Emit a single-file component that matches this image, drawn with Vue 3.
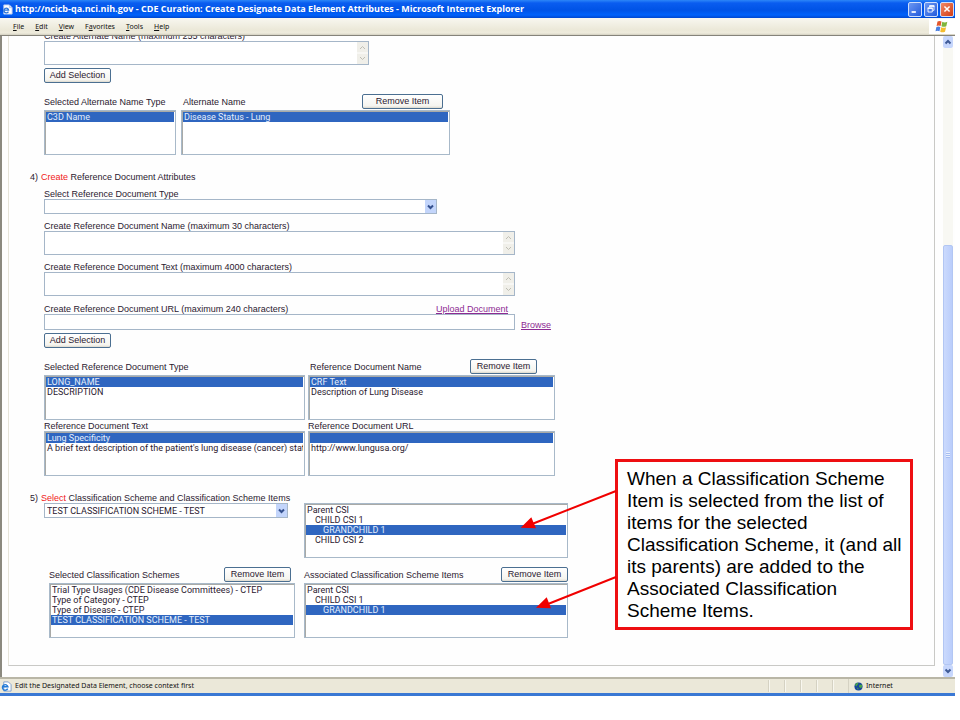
<script setup>
import { ref } from 'vue'

const title = 'http://ncicb-qa.nci.nih.gov - CDE Curation: Create Designate Data Element Attributes - Microsoft Internet Explorer'

const menus = [
  ['', 'F', 'ile'],
  ['', 'E', 'dit'],
  ['', 'V', 'iew'],
  ['F', 'a', 'vorites'],
  ['', 'T', 'ools'],
  ['', 'H', 'elp'],
]

const schemes = [
  'Trial Type Usages (CDE Disease Committees) - CTEP',
  'Type of Category - CTEP',
  'Type of Disease - CTEP',
  'TEST CLASSIFICATION SCHEME - TEST',
]

const schemeItems = [
  { text: 'Parent CSI', level: 0 },
  { text: 'CHILD CSI 1', level: 1 },
  { text: 'GRANDCHILD 1', level: 2 },
  { text: 'CHILD CSI 2', level: 1 },
]

const chosenNameType = ref(['C3D Name'])
const chosenName = ref(['Disease Status - Lung'])
const chosenDocType = ref(['LONG_NAME'])
const chosenDocName = ref(['CRF Text'])
const chosenDocText = ref(['Lung Specificity'])
const chosenDocUrl = ref([''])
const chosenScheme = ref(['TEST CLASSIFICATION SCHEME - TEST'])
const chosenItem = ref(['GRANDCHILD 1'])
const chosenAssociated = ref(['GRANDCHILD 1'])
const docType = ref('')
const scheme = ref('TEST CLASSIFICATION SCHEME - TEST')
</script>

<template>
  <div class="window">
    <header class="titlebar">
      <svg class="page-icon" viewBox="0 0 12 12" aria-hidden="true">
        <path d="M2 1h6l3 3v7H2z" fill="#fff" stroke="#b9cdf0" />
        <path d="M8 1v3h3" fill="#d8e5fb" stroke="#8faee0" stroke-width=".6" />
        <path d="M7 8.3A2.6 2.6 0 1 1 7.2 6.6H2.4" fill="none" stroke="#2a74d8" stroke-width="1.4" />
      </svg>
      <h1 class="title">{{ title }}</h1>
      <div class="window-buttons">
        <button class="win" type="button" aria-label="Minimize">
          <svg viewBox="0 0 14 14"><path d="M3 10.5h5" stroke="#fff" stroke-width="2" /></svg>
        </button>
        <button class="win" type="button" aria-label="Restore">
          <svg viewBox="0 0 14 14" fill="none" stroke="#fff"><path d="M5.5 5V3.5h5v5H9" /><path d="M3.5 6h5v4.5h-5z" /><path d="M3 6h6M5 3.5h6" stroke-width="1.5" /></svg>
        </button>
        <button class="win close" type="button" aria-label="Close">
          <svg viewBox="0 0 14 14"><path d="M4 4l6 6M10 4l-6 6" stroke="#fff" stroke-width="1.8" /></svg>
        </button>
      </div>
    </header>

    <nav class="menubar">
      <button v-for="m in menus" :key="m[2]" class="menu" type="button">{{ m[0] }}<u>{{ m[1] }}</u>{{ m[2] }}</button>
      <div class="flag">
        <svg viewBox="0 0 14 13" aria-hidden="true">
          <path d="M2.5 1.5q2-1.2 4 0L5.6 6q-2-1-4 0z" fill="#e4572b" />
          <path d="M7.3 1.8q2.500 1.200 5 0L11.300 6.300q-2.500 1-4.900 0z" fill="#7fb53c" />
          <path d="M1.400 6.900q2-1 4 0L4.500 11.300q-2-1.200-4 0z" fill="#4a7fe0" />
          <path d="M6.200 7.200q2.500 1 4.900 0L10 11.700q-2.500 1.100-4.800 0z" fill="#f4bd2f" />
        </svg>
      </div>
    </nav>

    <div class="viewport">
      <main class="frame">
        <section class="block names">
          <label class="label" for="alt-name">Create Alternate Name (maximum 255 characters)</label>
          <div class="area short">
            <textarea id="alt-name"></textarea>
            <svg class="spin" viewBox="0 0 11 22" aria-hidden="true"><path d="M0 11h11" stroke="#fff" /><path d="M3 7l2.500-2.500L8 7M3 15l2.500 2.500L8 15" /></svg>
          </div>
          <button class="btn add" type="button">Add Selection</button>

          <div class="pair alternate">
            <div class="col">
              <div class="head"><label class="label" for="alt-types">Selected Alternate Name Type</label></div>
              <select id="alt-types" v-model="chosenNameType" class="list" multiple>
                <option>C3D Name</option>
              </select>
            </div>
            <div class="col">
              <div class="head">
                <label class="label inset" for="alt-names">Alternate Name</label>
                <button class="btn wide" type="button">Remove Item</button>
              </div>
              <select id="alt-names" v-model="chosenName" class="list" multiple>
                <option>Disease Status - Lung</option>
              </select>
            </div>
          </div>
        </section>

        <section class="block documents">
          <h2 class="step"><span>4)</span><span><em>Create</em> Reference Document Attributes</span></h2>
          <label class="label" for="doc-type">Select Reference Document Type</label>
          <div class="combo doc-combo">
            <select id="doc-type" v-model="docType"><option value=""></option></select>
            <svg viewBox="0 0 11 13" aria-hidden="true"><path d="M3 5.500l2.500 2.500L8 5.500" /></svg>
          </div>
          <label class="label spaced" for="doc-name">Create Reference Document Name (maximum 30 characters)</label>
          <div class="area">
            <textarea id="doc-name"></textarea>
            <svg class="spin" viewBox="0 0 11 22" aria-hidden="true"><path d="M0 11h11" stroke="#fff" /><path d="M3 7l2.500-2.500L8 7M3 15l2.500 2.500L8 15" /></svg>
          </div>
          <label class="label spaced" for="doc-text">Create Reference Document Text (maximum 4000 characters)</label>
          <div class="area">
            <textarea id="doc-text"></textarea>
            <svg class="spin" viewBox="0 0 11 22" aria-hidden="true"><path d="M0 11h11" stroke="#fff" /><path d="M3 7l2.500-2.500L8 7M3 15l2.500 2.500L8 15" /></svg>
          </div>
          <div class="url-head">
            <label class="label" for="doc-url">Create Reference Document URL (maximum 240 characters)</label>
            <a class="link" href="#upload">Upload Document</a>
          </div>
          <div class="url-row">
            <input id="doc-url" class="text" type="text" />
            <a class="link" href="#browse">Browse</a>
          </div>
          <button class="btn add" type="button">Add Selection</button>

          <div class="pair reference">
            <div class="col">
              <div class="head"><label class="label" for="doc-types">Selected Reference Document Type</label></div>
              <select id="doc-types" v-model="chosenDocType" class="list" multiple>
                <option>LONG_NAME</option>
                <option>DESCRIPTION</option>
              </select>
            </div>
            <div class="col">
              <div class="head">
                <label class="label inset" for="doc-names">Reference Document Name</label>
                <button class="btn drawn-in" type="button">Remove Item</button>
              </div>
              <select id="doc-names" v-model="chosenDocName" class="list" multiple>
                <option>CRF Text</option>
                <option>Description of Lung Disease</option>
              </select>
            </div>
            <div class="col">
              <label class="label" for="doc-texts">Reference Document Text</label>
              <select id="doc-texts" v-model="chosenDocText" class="list" multiple>
                <option>Lung Specificity</option>
                <option>A brief text description of the patient's lung disease (cancer) status and</option>
              </select>
            </div>
            <div class="col">
              <label class="label" for="doc-urls">Reference Document URL</label>
              <select id="doc-urls" v-model="chosenDocUrl" class="list" multiple>
                <option value=""></option>
                <option>http://www.lungusa.org/</option>
              </select>
            </div>
          </div>
        </section>

        <section class="block schemes">
          <h2 class="step"><span>5)</span><label for="scheme"><em>Select</em> Classification Scheme and Classification Scheme Items</label></h2>
          <div class="pair pick">
            <div class="combo">
              <select id="scheme" v-model="scheme"><option>TEST CLASSIFICATION SCHEME - TEST</option></select>
              <svg viewBox="0 0 11 13" aria-hidden="true"><path d="M3 5.500l2.500 2.500L8 5.500" /></svg>
            </div>
            <select v-model="chosenItem" class="list tall" multiple aria-label="Classification Scheme Items">
              <option v-for="i in schemeItems" :key="i.text" :class="'level-' + i.level">{{ i.text }}</option>
            </select>
          </div>
          <div class="pair associated">
            <div class="col">
              <div class="head">
                <label class="label" for="schemes">Selected Classification Schemes</label>
                <button class="btn tucked" type="button">Remove Item</button>
              </div>
              <select id="schemes" v-model="chosenScheme" class="list tall" multiple>
                <option v-for="s in schemes" :key="s">{{ s }}</option>
              </select>
            </div>
            <div class="col">
              <div class="head">
                <label class="label" for="items">Associated Classification Scheme Items</label>
                <button class="btn" type="button">Remove Item</button>
              </div>
              <select id="items" v-model="chosenAssociated" class="list tall" multiple>
                <option v-for="i in schemeItems.slice(0, 3)" :key="i.text" :class="'level-' + i.level">{{ i.text }}</option>
              </select>
            </div>
          </div>
        </section>
      </main>

      <div class="scrollbar" aria-hidden="true">
        <svg class="arrow" viewBox="0 0 10 12"><path d="M2.500 7.500L5 5l2.500 2.500" /></svg>
        <div class="track"><div class="thumb"><i></i></div></div>
        <svg class="arrow" viewBox="0 0 10 12"><path d="M2.500 4.500L5 7l2.500-2.500" /></svg>
      </div>

      <aside class="callout">
        <svg class="pointers" viewBox="0 0 100 130" aria-hidden="true">
          <path d="M98 7L14 40M98 93L30 120" stroke="#f00000" stroke-width="2" />
          <path d="M2.700 43.700L13.300 33.300L18 44.300zM18 123.700L28.700 113.300L33 124.300z" fill="#f00000" />
        </svg>
        <p class="note">When a Classification Scheme Item is selected from the list of items for the selected Classification Scheme, it (and all its parents) are added to the Associated Classification Scheme Items.</p>
      </aside>
    </div>

    <footer class="statusbar">
      <svg class="page-icon" viewBox="0 0 12 12" aria-hidden="true">
        <path d="M3 1h5l3 3v7H3z" fill="#fff" stroke="#7d9cc8" />
        <path d="M7.300 8.300A3 3 0 1 1 7.500 6.200H2.200" fill="none" stroke="#237bd8" stroke-width="1.600" />
      </svg>
      <span class="status">Edit the Designated Data Element, choose context first</span>
      <span class="panes"><i></i><i></i><i></i><i></i><i></i></span>
      <span class="zone">
        <svg viewBox="0 0 10 10" aria-hidden="true">
          <circle cx="5" cy="5" r="4.500" fill="#16449c" />
          <path d="M1 3q2-2.500 4-2l-1 2-1.500 2zM6 3l3 0q.5 2-1 4L5.500 5.500zM3 6l2 1-.5 2z" fill="#48a548" />
        </svg>
        Internet
      </span>
    </footer>
  </div>
</template>

<style>
body {
  margin: 0;
  background: #fff;
}
</style>

<style scoped>
* {
  box-sizing: border-box;
}

.window {
  margin-right: 5px;
  font: 9px/10px Roboto, Arial, sans-serif;
  color: #2b2030;
}

button,
input,
select,
textarea {
  margin: 0;
  padding: 0;
  border: 0;
  border-radius: 0;
  background: none;
  font: inherit;
  color: inherit;
}

svg {
  display: block;
}

/* Window chrome */
.titlebar {
  display: flex;
  align-items: center;
  height: 18px;
  padding: 0 1px 0 2px;
  background: linear-gradient(#2c86f8 0, #0a5df0 3px, #0053e6 10px, #0062fb 15px, #0047cf 18px);
}

.page-icon {
  width: 11px;
  height: 11px;
}

.title {
  flex: 1;
  margin: 0;
  padding-left: 2px;
  font: bold 9px/16px "Open Sans", "Trebuchet MS", sans-serif;
  color: #fff;
  white-space: nowrap;
}

.window-buttons {
  display: flex;
  gap: 2px;
}

.win {
  width: 14px;
  height: 15px;
  border: 1px solid #cfdffc;
  border-radius: 2px;
  background: linear-gradient(135deg, #6b97f2, #235bdc);
}

.win.close {
  background: linear-gradient(135deg, #f08a68, #d23c14);
}

.menubar {
  display: flex;
  align-items: center;
  gap: 11px;
  height: 18px;
  padding-left: 13px;
  border-bottom: 1px solid #85837a;
  background: linear-gradient(#f8f7f0 0, #ebe8d8 12px, #eeebdc 15px, #d2cfc0 17px);
}

.menu {
  font: 7px/14px "Noto Sans", Tahoma, sans-serif;
  color: #111;
}

.flag {
  display: grid;
  place-items: center;
  width: 26px;
  height: 15px;
  margin-left: auto;
  background: #fff;
}

.flag svg {
  width: 14px;
  height: 13px;
}

/* Scrolled page */
.viewport {
  position: relative;
  display: flex;
  border-left: 2px solid #8b897f;
  padding-left: 6px;
  background: #fefefe;
}

.frame {
  flex: 1;
  min-width: 0;
  margin-bottom: 11px;
  padding: 0 0 27px 21px;
  border: solid #c9c9c6;
  border-width: 0 1px 1px;
  border-left-color: #e6e4da;
  overflow: hidden;
}

.block {
  padding-left: 14px;
}

.names {
  margin-top: -5px;
}

.documents,
.schemes {
  padding-top: 17px;
}

.label,
.step,
.link {
  font-family: "Liberation Sans", Arial, sans-serif;
}

.label {
  display: block;
  white-space: nowrap;
}

.label.spaced {
  margin-top: 7px;
}

.documents > .label:first-of-type {
  margin-top: 7px;
}

.step {
  display: flex;
  gap: 3px;
  margin: 0 0 0 -14px;
  font-size: 9px;
  font-weight: normal;
}

.step em {
  font-style: normal;
  color: #f01820;
}

.area {
  display: flex;
  width: 471px;
  height: 24px;
  border: 1px solid #a5b6c8;
  background: #fff;
}

.area.short {
  width: 325px;
}

.area textarea {
  flex: 1;
  resize: none;
  overflow: hidden;
}

.spin {
  width: 11px;
  height: 22px;
  background: #f0efe9;
  fill: none;
  stroke: #bfbeb4;
}

.btn {
  display: block;
  height: 15px;
  width: 67px;
  border: 1px solid #4b6f91;
  border-radius: 2px;
  background: linear-gradient(#fff, #f5f4ef 11px, #dcd8cc);
  font-family: "Liberation Sans", Arial, sans-serif;
  font-size: 9px;
  line-height: 13px;
  white-space: nowrap;
}

.btn.add {
  margin-top: 3px;
}

.btn.wide {
  width: 81px;
  margin-right: 7px;
}

.btn.drawn-in {
  margin-right: 18px;
}

.btn.tucked {
  margin-right: 4px;
}

.pair {
  display: grid;
}

.alternate {
  grid-template-columns: 132px 269px;
  column-gap: 5px;
  margin-top: 11px;
}

.reference {
  grid-template-columns: 261px 247px;
  column-gap: 3px;
  row-gap: 1px;
  margin-top: 11px;
}

.pick {
  grid-template-columns: 244px 264px;
  column-gap: 16px;
  align-items: start;
}

.associated {
  grid-template-columns: 246px 264px;
  column-gap: 9px;
  margin: 9px 0 0 5px;
}

.head {
  display: flex;
  align-items: center;
  justify-content: space-between;
  height: 16px;
  padding-bottom: 1px;
}

.label.inset {
  padding-left: 2px;
}

.list {
  display: block;
  width: 100%;
  height: 45px;
  padding: 1px;
  border: 1px solid #a8b9c9;
  box-shadow: inset 1px 1px #a9aaa7;
  background: #fff;
  overflow: hidden;
}

.list.tall {
  height: 55px;
}

.list option {
  height: 10px;
  min-height: 10px;
  padding: 0 1px;
  line-height: 10px;
  white-space: nowrap;
  overflow: hidden;
}

.list option:checked {
  background: linear-gradient(#2f66c0, #2f66c0);
  -webkit-text-fill-color: #e4eefc;
}

.list option.level-1 {
  padding-left: 9px;
}

.list option.level-2 {
  padding-left: 17px;
}

.combo {
  display: grid;
  height: 15px;
  border: 1px solid #a5b6c8;
  background: #fff;
}

.doc-combo {
  width: 393px;
}

.combo select,
.combo svg {
  grid-area: 1 / 1;
}

.combo select {
  appearance: none;
  height: 13px;
  padding-left: 2px;
}

.combo svg {
  justify-self: end;
  width: 11px;
  height: 13px;
  background: #c3d5fb;
  fill: none;
  stroke: #34508e;
  stroke-width: 2;
  pointer-events: none;
}

.url-head {
  display: flex;
  justify-content: space-between;
  width: 464px;
  margin-top: 8px;
}

.url-row {
  display: flex;
  align-items: flex-end;
  gap: 6px;
}

.text {
  width: 471px;
  height: 16px;
  border: 1px solid #a5b6c8;
  background: #fff;
}

.link {
  color: #8d2a93;
}

.scrollbar {
  display: flex;
  flex-direction: column;
  width: 10px;
  margin: 0 2px 0 8px;
}

.arrow {
  width: 10px;
  height: 12px;
  border-radius: 2px;
  background: #c6d6fc;
  fill: none;
  stroke: #3e5a96;
  stroke-width: 2;
}

.track {
  flex: 1;
  display: flex;
  flex-direction: column;
  justify-content: flex-end;
  background: #f8f8f3;
}

.thumb {
  display: grid;
  place-items: center;
  height: 68%;
  border: 1px solid #b2c6f3;
  border-radius: 2px;
  background: linear-gradient(90deg, #cbdafd, #bacdfb);
}

.thumb i {
  width: 4px;
  height: 6px;
  background: repeating-linear-gradient(#e8effe 0 1px, #a6bdf0 1px 2px);
}

/* Annotation laid over the page */
.callout {
  position: absolute;
  top: 423px;
  left: 613px;
  width: 298px;
}

.note {
  margin: 0;
  padding: 6px 8px 5px 9px;
  border: 3px solid #ee0f12;
  background: #fff;
  font-family: "Liberation Sans", Arial, sans-serif;
  font-size: 19px;
  line-height: 22px;
  color: #000;
}

.pointers {
  position: absolute;
  top: 25px;
  right: 295px;
  width: 100px;
  height: 130px;
}

/* Status bar */
.statusbar {
  display: flex;
  align-items: center;
  height: 19px;
  padding-left: 1px;
  border-top: 2px solid #b9b6a6;
  border-bottom: 3px solid #3a78d4;
  background: #ebe8d9;
  font: 7px/14px "Noto Sans", Tahoma, sans-serif;
  color: #111;
}

.status {
  flex: 1;
  padding-left: 3px;
}

.panes {
  display: flex;
}

.panes i {
  width: 16px;
  height: 12px;
  border-left: 1px solid #d5d2c3;
  box-shadow: inset 1px 0 #f8f7ef;
}

.zone {
  display: flex;
  align-items: center;
  gap: 3px;
  width: 107px;
  padding-left: 5px;
  border-left: 1px solid #d5d2c3;
}

.zone svg {
  width: 9px;
  height: 9px;
}
</style>
